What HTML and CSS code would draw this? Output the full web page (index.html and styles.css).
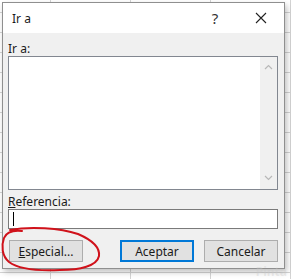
FILE: index.html
```html
<!DOCTYPE html>
<html lang="es">
<head>
    <title>Ir a</title>
    <link rel="stylesheet" href="styles.css">
</head>
<body>
    <div class="sheet">
        <div class="dialog">
            <!-- Title bar -->
            <div class="titlebar">
                <span class="title">Ir a</span>
                <div class="title-buttons">
                    <div class="title-btn help">?</div>
                    <div class="title-btn">
                        <svg width="12" height="12" viewBox="0 0 12 12">
                            <path d="M1 1 L11 11 M11 1 L1 11" stroke="#222" stroke-width="1.1" fill="none"/>
                        </svg>
                    </div>
                </div>
            </div>

            <!-- Dialog body -->
            <div class="dialog-body">
                <div class="label">Ir a:</div>
                <div class="listbox">
                    <div class="list-items"></div>
                    <div class="scrollbar">
                        <svg width="9" height="6" viewBox="0 0 9 6">
                            <path d="M1 5 L4.5 1.5 L8 5" stroke="#b8b8b8" stroke-width="1.2" fill="none"/>
                        </svg>
                        <svg width="9" height="6" viewBox="0 0 9 6">
                            <path d="M1 1 L4.5 4.5 L8 1" stroke="#b8b8b8" stroke-width="1.2" fill="none"/>
                        </svg>
                    </div>
                </div>

                <div class="label ref-label"><u>R</u>eferencia:</div>
                <div class="textbox"><span class="caret"></span></div>

                <div class="buttons">
                    <button class="btn"><u>E</u>special...</button>
                    <div class="spacer"></div>
                    <button class="btn default">Aceptar</button>
                    <button class="btn">Cancelar</button>
                </div>
            </div>
        </div>

        <!-- Hand drawn mark around the Especial button -->
        <svg class="scribble" width="110" height="50" viewBox="0 0 110 50">
            <path d="M10 4 C30 0 60 2 78 8 C92 14 100 22 99 30 C97 40 80 44 60 44 C40 45 20 44 9 36 C2 30 1 20 4 12 C6 7 12 4 22 5"
                  stroke="#d0121b" stroke-width="2" fill="none" stroke-linecap="round"/>
        </svg>

        <div class="watermark">Pinta</div>
    </div>
</body>
</html>
```

FILE: styles.css
```css
/* Page and spreadsheet backdrop */
body {
    margin: 0;
    font-family: "Noto Sans", "Open Sans", sans-serif;
    font-size: 12px;
    color: #1a1a1a;
}

.sheet {
    position: relative;
    width: 291px;
    height: 279px;
    overflow: hidden;
    background-color: #fff;
    background-image:
        linear-gradient(to right, #d4d4d4 1px, transparent 1px),
        linear-gradient(to bottom, #d4d4d4 1px, transparent 1px);
    background-size: 80px 100%, 100% 20px;
    background-position: 50px 0, 0 12px;
    padding: 2px 0 0 2px;
    box-sizing: border-box;
}

/* Dialog window */
.dialog {
    width: 283px;
    height: 267px;
    border: 1px solid #8f8f8f;
    box-sizing: border-box;
    background: #f0f0f0;
    box-shadow: 2px 3px 6px rgba(0, 0, 0, 0.25);
    display: flex;
    flex-direction: column;
}

.titlebar {
    height: 30px;
    background: #fff;
    display: flex;
    align-items: center;
    justify-content: space-between;
    padding-left: 9px;
}

.title {
    font-size: 12px;
}

.title-buttons {
    display: flex;
    height: 100%;
}

.title-btn {
    width: 46px;
    display: flex;
    align-items: center;
    justify-content: center;
    font-size: 15px;
}

.title-btn.help {
    color: #333;
}

.dialog-body {
    flex: 1;
    padding: 9px 6px 0 5px;
    display: flex;
    flex-direction: column;
}

.label {
    line-height: 14px;
}

/* List of names */
.listbox {
    height: 134px;
    border: 1px solid #828790;
    background: #fff;
    box-sizing: border-box;
    display: flex;
}

.list-items {
    flex: 1;
}

.scrollbar {
    width: 17px;
    background: #f0f0f0;
    display: flex;
    flex-direction: column;
    justify-content: space-between;
    align-items: center;
    padding: 7px 0 8px;
}

.ref-label {
    margin-top: 5px;
}

.textbox {
    height: 20px;
    border: 1px solid #7a7a7a;
    background: #fff;
    box-sizing: border-box;
    padding: 2px 4px;
}

.caret {
    display: block;
    width: 1px;
    height: 14px;
    background: #000;
}

/* Buttons row */
.buttons {
    display: flex;
    gap: 10px;
    margin-top: 11px;
    padding-left: 1px;
}

.spacer {
    flex: 1;
}

.btn {
    width: 74px;
    height: 22px;
    font-family: inherit;
    font-size: 12px;
    color: #1a1a1a;
    background: #e1e1e1;
    border: 1px solid #adadad;
    padding: 0;
}

.btn.default {
    border: 2px solid #0078d7;
}

/* Overlays */
.scribble {
    position: absolute;
    left: 0;
    top: 226px;
}

.watermark {
    position: absolute;
    right: 4px;
    top: 265px;
    font-size: 12px;
    line-height: 13px;
    font-weight: bold;
    color: rgba(200, 200, 200, 0.35);
}
```
